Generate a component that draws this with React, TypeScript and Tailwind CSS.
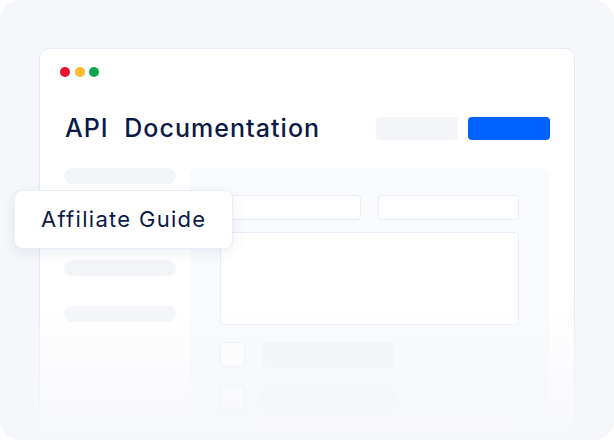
import React from "react";

export default function App() {
  const font = { fontFamily: "Inter, 'Noto Sans', sans-serif" };
  return (
    <div className="w-[614px] h-[440px] bg-white" style={font}>
      <div className="relative h-full overflow-hidden rounded-[20px] bg-[#f6f7fa] pl-[39px] pr-[39px] pt-[48px]">
        <div className="h-[420px] rounded-t-[10px] border border-[#e5eaf7] bg-white">
          {/* traffic dots */}
          <div className="flex gap-[4.5px] pl-[20px] pt-[18px]">
            <div className="h-[10px] w-[10px] rounded-full bg-[#e8112d]" />
            <div className="h-[10px] w-[10px] rounded-full bg-[#fdb92c]" />
            <div className="h-[10px] w-[10px] rounded-full bg-[#0ea44f]" />
          </div>
          {/* header */}
          <div className="mt-[36px] flex items-center justify-between pl-[25px] pr-[24px]">
            <div className="text-[25px] leading-[30px] font-medium tracking-[1.05px] text-[#0c1a47]">
              API&nbsp; Documentation
            </div>
            <div className="flex gap-[10px]">
              <div className="h-[23px] w-[82px] rounded-[4px] bg-[#f4f5f9]" />
              <div className="h-[23px] w-[82px] rounded-[4px] bg-[#0062ff]" />
            </div>
          </div>
          {/* body */}
          <div className="mt-[25px] flex gap-[14px] pl-[24px]">
            <div className="flex w-[112px] flex-col gap-[30px]">
              <div className="h-[16px] rounded-full bg-[#f3f5f9]" />
              <div className="h-[16px] rounded-full bg-[#f3f5f9]" />
              <div className="h-[16px] rounded-full bg-[#f3f5f9]" />
              <div className="h-[16px] rounded-full bg-[#f3f5f9]" />
            </div>
            <div className="h-[250px] w-[359px] rounded-[8px] bg-[#f9fafc] px-[30px] pt-[27px]">
              <div className="flex gap-[17px]">
                <div className="h-[25px] w-[141px] rounded-[4px] border border-[#e8edf8] bg-white" />
                <div className="h-[25px] w-[141px] rounded-[4px] border border-[#e8edf8] bg-white" />
              </div>
              <div className="mt-[12px] h-[93px] w-[299px] rounded-[4px] border border-[#e8edf8] bg-white" />
              <div className="mt-[17px] flex flex-col gap-[18px]">
                <div className="flex items-center gap-[17px]">
                  <div className="h-[25px] w-[25px] rounded-[4px] border border-[#e8edf8] bg-white" />
                  <div className="h-[25px] w-[132px] rounded-[4px] bg-[#f3f4f8]" />
                </div>
                <div className="flex items-center gap-[17px]">
                  <div className="h-[25px] w-[25px] rounded-[4px] border border-[#e8edf8] bg-white" />
                  <div className="h-[25px] w-[132px] rounded-[4px] bg-[#f3f4f8]" />
                </div>
              </div>
            </div>
          </div>
        </div>
        {/* bottom fade */}
        <div className="pointer-events-none absolute bottom-0 left-0 right-0 h-[150px] bg-gradient-to-b from-[#f6f7fa00] via-[#f6f7fa80] to-[#f6f7fa]" />
        {/* popup */}
        <div className="absolute left-[14px] top-[190px] flex h-[59px] w-[219px] items-center rounded-[8px] border border-[#e8edf8] bg-white pl-[26px] shadow-[0_4px_14px_rgba(30,50,100,0.08)]">
          <span className="text-[22px] tracking-[1.3px] text-[#0c1a47]">Affiliate Guide</span>
        </div>
      </div>
    </div>
  );
}
